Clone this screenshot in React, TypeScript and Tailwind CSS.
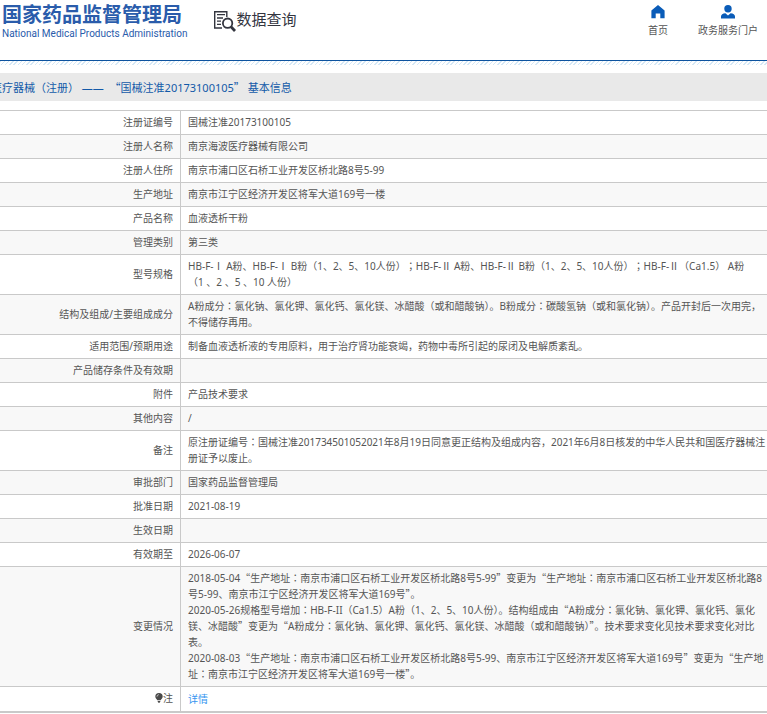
import { Fragment } from "react";

type Row = { label: string; value: string[]; bulb?: boolean; link?: boolean; wide?: boolean };

const rows: Row[] = [
  { label: "注册证编号", value: ["国械注准20173100105"] },
  { label: "注册人名称", value: ["南京海波医疗器械有限公司"] },
  { label: "注册人住所", value: ["南京市浦口区石桥工业开发区桥北路8号5-99"] },
  { label: "生产地址", value: ["南京市江宁区经济开发区将军大道169号一楼"] },
  { label: "产品名称", value: ["血液透析干粉"] },
  { label: "管理类别", value: ["第三类"] },
  {
    label: "型号规格",
    wide: true,
    value: [
      "HB-F-Ⅰ A粉、HB-F-Ⅰ B粉（1、2、5、10人份）；HB-F-Ⅱ A粉、HB-F-Ⅱ B粉（1、2、5、10人份）；HB-F-Ⅱ（Ca1.5） A粉",
      "（1 、2 、5 、10 人份）",
    ],
  },
  {
    label: "结构及组成/主要组成成分",
    value: [
      "A粉成分：氯化钠、氯化钾、氯化钙、氯化镁、冰醋酸（或和醋酸钠）。B粉成分：碳酸氢钠（或和氯化钠）。产品开封后一次用完，",
      "不得储存再用。",
    ],
  },
  {
    label: "适用范围/预期用途",
    value: ["制备血液透析液的专用原料，用于治疗肾功能衰竭，药物中毒所引起的尿闭及电解质紊乱。"],
  },
  { label: "产品储存条件及有效期", value: [""] },
  { label: "附件", value: ["产品技术要求"] },
  { label: "其他内容", value: ["/"] },
  {
    label: "备注",
    value: [
      "原注册证编号：国械注准201734501052021年8月19日同意更正结构及组成内容，2021年6月8日核发的中华人民共和国医疗器械注",
      "册证予以废止。",
    ],
  },
  { label: "审批部门", value: ["国家药品监督管理局"] },
  { label: "批准日期", value: ["2021-08-19"] },
  { label: "生效日期", value: [""] },
  { label: "有效期至", value: ["2026-06-07"] },
  {
    label: "变更情况",
    value: [
      "2018-05-04“生产地址：南京市浦口区石桥工业开发区桥北路8号5-99”变更为“生产地址：南京市浦口区石桥工业开发区桥北路8",
      "号5-99、南京市江宁区经济开发区将军大道169号”。",
      "2020-05-26规格型号增加：HB-F-II（Ca1.5）A粉（1、2、5、10人份）。结构组成由“A粉成分：氯化钠、氯化钾、氯化钙、氯化",
      "镁、冰醋酸”变更为“A粉成分：氯化钠、氯化钾、氯化钙、氯化镁、冰醋酸（或和醋酸钠）”。技术要求变化见技术要求变化对比",
      "表。",
      "2020-08-03“生产地址：南京市浦口区石桥工业开发区桥北路8号5-99、南京市江宁区经济开发区将军大道169号”变更为“生产地",
      "址：南京市江宁区经济开发区将军大道169号一楼”。",
    ],
  },
  { label: "注", value: ["详情"], bulb: true, link: true },
];

// Full-width quotes and centred colons come from the CJK faces.
function Zh({ children }: { children: string }) {
  return (
    <>
      {children.split(/([“”：；])/).map((part, i) => {
        if (/^[“”]$/.test(part))
          return <span key={i} className="font-['Noto_Sans_CJK_SC',sans-serif]">{part}</span>;
        if (/^[：；]$/.test(part))
          return <span key={i} className="font-['Noto_Sans_CJK_TC',sans-serif]">{part}</span>;
        return <Fragment key={i}>{part}</Fragment>;
      })}
    </>
  );
}

function SearchDocIcon() {
  return (
    <svg width="23" height="22" viewBox="0 0 23 22" fill="none" stroke="#33353f" aria-hidden="true">
      <path d="M13.800 7V1.700H1.700v16.300H9" strokeWidth="1.4" />
      <path d="M4 4.700h8M4 8h6M4 11.200h4M4 14.400h4" strokeWidth="1.3" />
      <circle cx="14.600" cy="13.200" r="4.700" strokeWidth="1.8" />
      <path d="M18 16.800l4 4.200" strokeWidth="2.800" />
    </svg>
  );
}

function HomeIcon() {
  return (
    <svg width="14" height="14" viewBox="0 0 14 14" fill="#0a5cb8" aria-hidden="true">
      <path d="M7 0l6.600 5.600v7.600H9.300V8.600H4.700v4.600H.4V5.600z" />
    </svg>
  );
}

function PersonIcon() {
  return (
    <svg width="14" height="14" viewBox="0 0 14 14" fill="#0a5cb8" aria-hidden="true">
      <circle cx="7" cy="3.700" r="3.700" />
      <path d="M0 13.600V11.500C0 9.500 1.800 8.500 4.400 8.300L7 10.600l2.600-2.300C12.200 8.500 14 9.500 14 11.500v2.100z" />
    </svg>
  );
}

function BulbIcon() {
  return (
    <svg width="8" height="10" viewBox="0 0 8 10" fill="#4a4a4a" aria-hidden="true">
      <path d="M4 0a3.700 3.700 0 0 1 3.700 3.700C7.700 5.300 6 6 5.700 7.300H2.300C2 6 .3 5.300.3 3.700A3.700 3.700 0 0 1 4 0zM2.700 7.900h2.600v.8L4.600 9.800H3.400l-.7-1.100z" />
      <path d="M2 3.600C2 2.500 2.800 1.800 3.800 1.700" stroke="#fff" strokeWidth=".7" fill="none" />
    </svg>
  );
}

export default function App() {
  return (
    <div className="overflow-hidden bg-white font-['Noto_Sans','Noto_Sans_CJK_SC',sans-serif] text-[10px] leading-4 text-[#555555]">
      <header className="flex h-[61px] items-start border-b border-[#0d539f] pl-[2px] pr-[9px]">
        <a href="#home" className="whitespace-nowrap text-[#2a5cab]">
          <span className="block pt-[3px] text-[20px] font-bold leading-6">国家药品监督管理局</span>
          <span className="block font-['Roboto',sans-serif] text-[10px] leading-[14px]">
            National Medical Products Administration
          </span>
        </a>
        <h1 className="ml-[26px] flex pt-[10px] text-[15px] leading-[18px] text-[#33353f]">
          <SearchDocIcon />
          数据查询
        </h1>
        <nav className="ml-auto flex gap-[30px] pt-[5px]">
          <a href="#index" className="flex flex-col items-center gap-[3px]">
            <HomeIcon />
            首页
          </a>
          <a href="#portal" className="flex flex-col items-center gap-[3px]">
            <PersonIcon />
            政务服务门户
          </a>
        </nav>
      </header>
      <div className="h-1 bg-[repeating-linear-gradient(135deg,#d5e8f6_0px,#d5e8f6_1px,#ffffff_1px,#ffffff_3px)]" />

      <h2 className="mt-2 -ml-[9px] h-7 whitespace-pre bg-[#e9e9e9] text-[11px] leading-7 text-[#1259a8] [text-spacing-trim:space-all]">
        <Zh>医疗器械（注册） ——  “国械注准20173100105” 基本信息</Zh>
      </h2>

      <table className="mt-[9px] w-full border-separate border-spacing-0 border-t border-b border-[#c9c9c9]">
        <tbody>
          {rows.map((row) => (
            <tr key={row.label} className="even:bg-[#f8f8f8]">
              <th
                scope="row"
                className="h-6 w-[181px] border-b border-r border-[#c9c9c9] pt-[3px] pb-1 pr-[7px] text-right align-middle font-normal"
              >
                <span className="inline-flex items-center">
                  {row.bulb && <BulbIcon />}
                  {row.label}
                </span>
              </th>
              <td
                className={
                  row.wide
                    ? "h-6 border-b border-[#c9c9c9] pt-[3px] pb-1 pl-[7px] align-middle [text-spacing-trim:space-all]"
                    : "h-6 border-b border-[#c9c9c9] pt-[3px] pb-1 pl-[7px] align-middle"
                }
              >
                {row.value.map((text, i) =>
                  row.link ? (
                    <a key={i} href="#details" className="text-[#3595f0]">
                      {text}
                    </a>
                  ) : (
                    <p key={i}>
                      <Zh>{text}</Zh>
                    </p>
                  ),
                )}
              </td>
            </tr>
          ))}
        </tbody>
      </table>
    </div>
  );
}
